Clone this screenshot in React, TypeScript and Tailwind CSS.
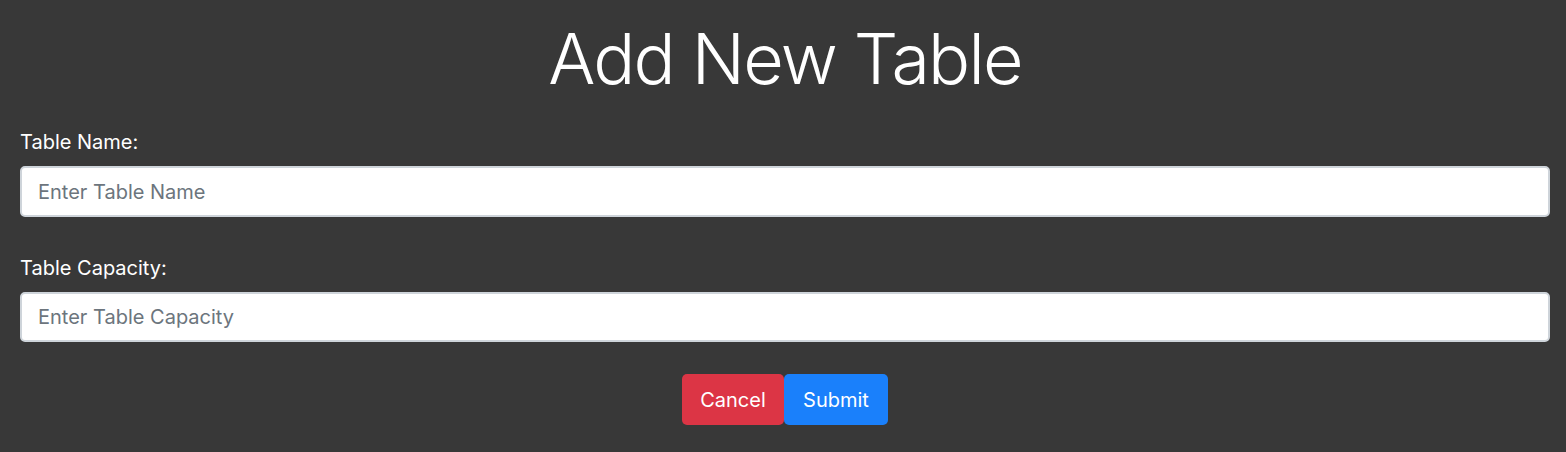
export default function App() {
  return (
    <div
      className="min-h-[452px] bg-[#383838] pl-5 pr-4 text-white"
      style={{ fontFamily: "Inter, 'Noto Sans', sans-serif" }}
    >
      <h1 className="pt-[16px] text-center text-[70px] font-light leading-[86px] tracking-[-1.8px]">
        Add New Table
      </h1>

      <form className="mt-[26px]">
        <div>
          <label className="mb-[10px] block text-[20px] leading-[28px]">Table Name:</label>
          <input
            type="text"
            placeholder="Enter Table Name"
            className="block h-[51px] w-full rounded-[5px] border-2 border-[#ced4da] bg-white px-[16px] text-[20px] text-[#495057] placeholder:text-[#6c757d] outline-none"
          />
        </div>

        <div className="mt-[37px]">
          <label className="mb-[10px] block text-[20px] leading-[28px]">Table Capacity:</label>
          <input
            type="text"
            placeholder="Enter Table Capacity"
            className="block h-[50px] w-full rounded-[5px] border-2 border-[#ced4da] bg-white px-[16px] text-[20px] text-[#495057] placeholder:text-[#6c757d] outline-none"
          />
        </div>

        <div className="mt-[32px] flex justify-center">
          <button
            type="button"
            className="h-[51px] w-[102px] rounded-[5px] bg-[#dc3545] text-[20px] text-white"
          >
            Cancel
          </button>
          <button
            type="submit"
            className="h-[51px] w-[104px] rounded-[5px] bg-[#1a80fb] text-[20px] text-white"
          >
            Submit
          </button>
        </div>
      </form>
    </div>
  );
}
